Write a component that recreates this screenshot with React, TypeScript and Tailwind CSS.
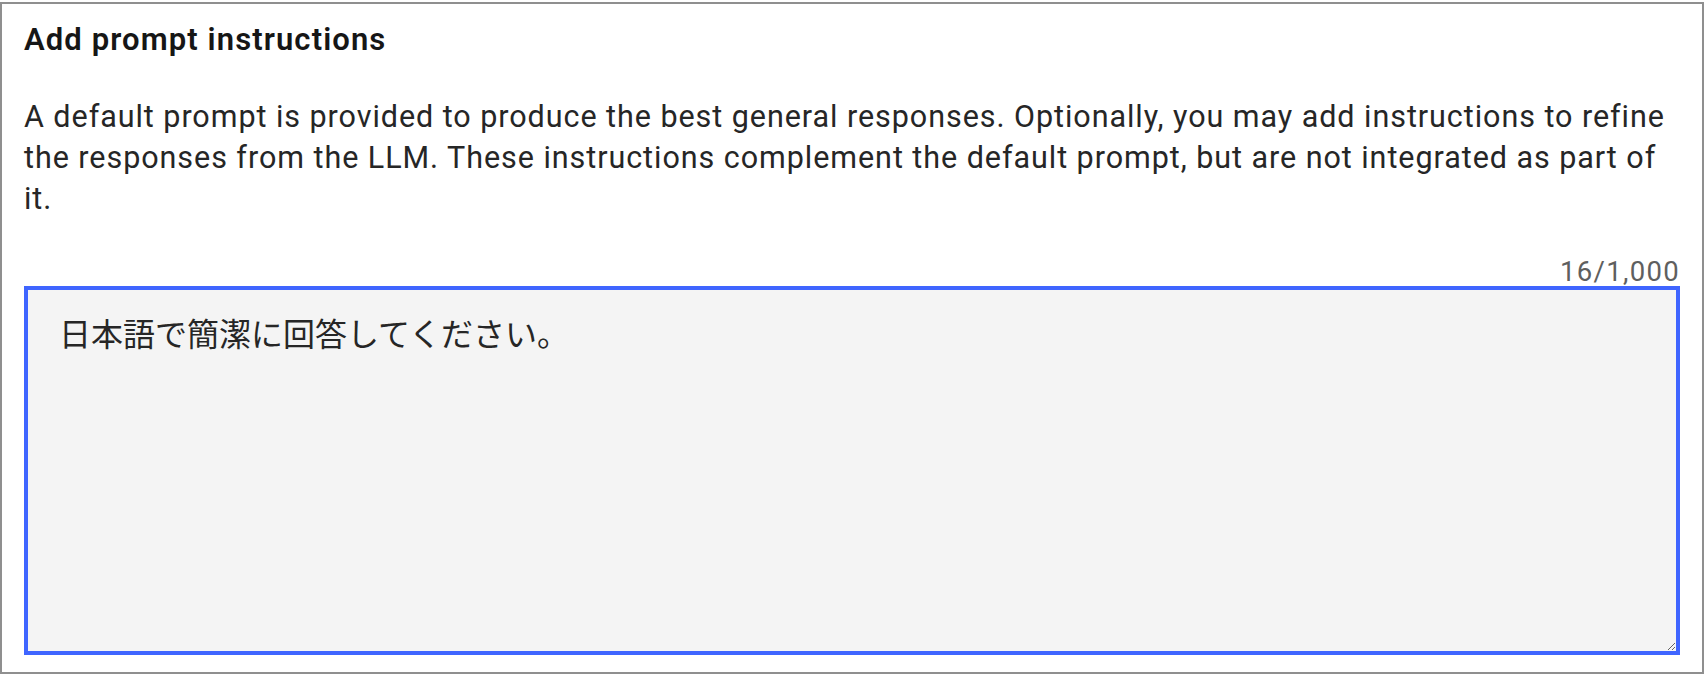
import React, { useState } from 'react';

const MAX = 1000;

export default function App() {
  const [text, setText] = useState('日本語で簡潔に回答してください。');

  return (
    <div className="w-[1705px] h-[675px] bg-white pt-[2px]">
      <div className="w-[1704px] h-[672px] border-2 border-[#8f8f8f] flex flex-col px-[22px] pb-[17px] pt-[18px] font-['Roboto',sans-serif] text-[#161616]">
        {/* Heading */}
        <h2 className="text-[31px] leading-[36px] font-semibold tracking-[1.1px]">
          Add prompt instructions
        </h2>

        {/* Helper copy */}
        <p className="mt-[38px] text-[30.5px] leading-[41px] tracking-[0.95px] text-[#262626]">
          A default prompt is provided to produce the best general responses. Optionally, you may add instructions to refine
          the responses from the LLM. These instructions complement the default prompt, but are not integrated as part of it.
        </p>

        {/* Counter */}
        <div className="mt-[38px] text-right text-[27.5px] leading-[29px] tracking-[1.3px] text-[#5f5f5f]">
          {text.length}/{MAX.toLocaleString('en-US')}
        </div>

        {/* Textarea */}
        <textarea
          value={text}
          onChange={(e) => setText(e.target.value.slice(0, MAX))}
          className="flex-1 w-full border-4 border-[#3f65ff] bg-[#f4f4f4] pl-[31px] pr-[31px] pt-[20px] text-[32px] leading-[44px] text-[#262626] font-['Noto_Sans_CJK_JP','Noto_Sans',sans-serif] outline-none resize"
        />
      </div>
    </div>
  );
}
